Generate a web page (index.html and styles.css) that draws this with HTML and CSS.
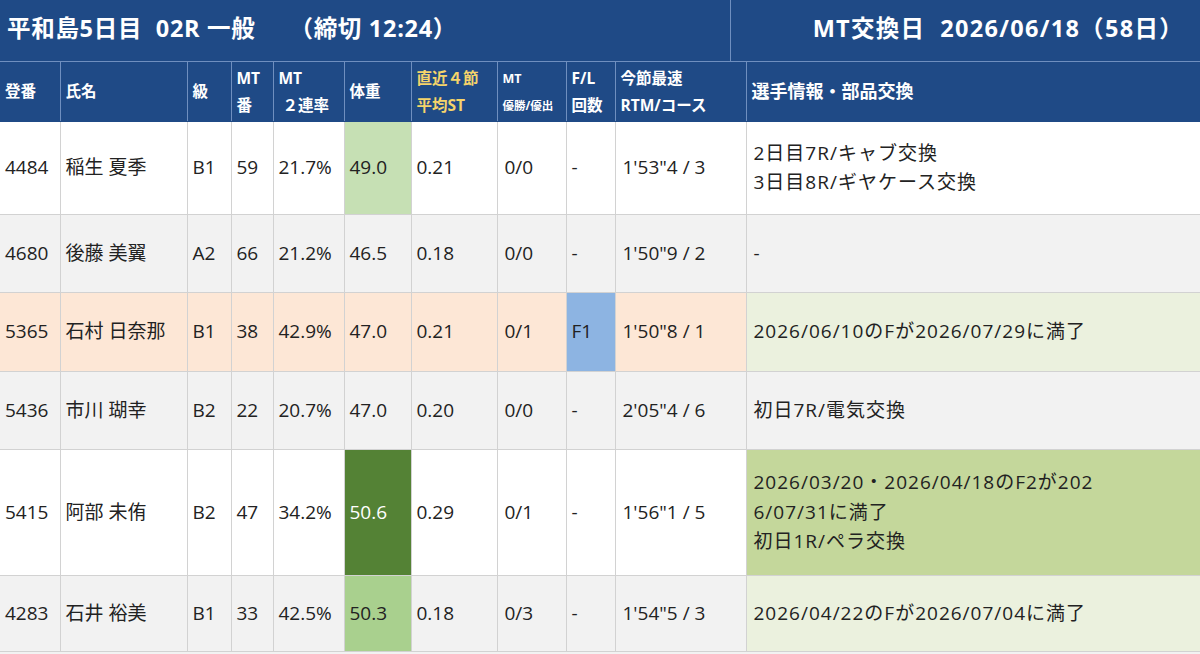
FILE: index.html
```html
<!DOCTYPE html>
<html lang="ja">
<head>
<meta charset="utf-8">
<link rel="stylesheet" href="styles.css">
</head>
<body>
<div class="titlebar">
  <div class="title-left">平和島5日目&nbsp; 02R 一般&nbsp;&nbsp;&nbsp;&nbsp;&nbsp;（締切 12:24）</div>
  <div class="title-right">MT交換日&nbsp; 2026/06/18（58日）</div>
</div>
<table class="grid">
  <colgroup>
    <col class="c1"><col class="c2"><col class="c3"><col class="c4"><col class="c5"><col class="c6"><col class="c7"><col class="c8"><col class="c9"><col class="c10"><col class="c11">
  </colgroup>
  <thead>
    <tr>
      <th>登番</th>
      <th>氏名</th>
      <th>級</th>
      <th>MT<br>番</th>
      <th>MT<br>&nbsp;２連率</th>
      <th>体重</th>
      <th class="yellow">直近４節<br>平均ST</th>
      <th class="small"><span class="mt">MT</span><br>優勝/優出</th>
      <th>F/L<br>回数</th>
      <th>今節最速<br>RTM/コース</th>
      <th class="big">選手情報・部品交換</th>
    </tr>
  </thead>
  <tbody>
    <tr class="r1 white">
      <td>4484</td><td>稲生 夏季</td><td>B1</td><td>59</td><td>21.7%</td><td class="w-light">49.0</td><td>0.21</td><td class="pl">0/0</td><td>-</td><td class="pl">1'53"4 / 3</td><td class="info">2日目7R/キャブ交換<br>3日目8R/ギヤケース交換</td>
    </tr>
    <tr class="r2 grey">
      <td>4680</td><td>後藤 美翼</td><td>A2</td><td>66</td><td>21.2%</td><td>46.5</td><td>0.18</td><td class="pl">0/0</td><td>-</td><td class="pl">1'50"9 / 2</td><td class="info">-</td>
    </tr>
    <tr class="r3 peach">
      <td>5365</td><td>石村 日奈那</td><td>B1</td><td>38</td><td>42.9%</td><td>47.0</td><td>0.21</td><td class="pl">0/1</td><td class="fl-blue">F1</td><td class="pl">1'50"8 / 1</td><td class="info i-light">2026/06/10のFが2026/07/29に満了</td>
    </tr>
    <tr class="r4 grey">
      <td>5436</td><td>市川 瑚幸</td><td>B2</td><td>22</td><td>20.7%</td><td>47.0</td><td>0.20</td><td class="pl">0/0</td><td>-</td><td class="pl">2'05"4 / 6</td><td class="info">初日7R/電気交換</td>
    </tr>
    <tr class="r5 white">
      <td>5415</td><td>阿部 未侑</td><td>B2</td><td>47</td><td>34.2%</td><td class="w-dark">50.6</td><td>0.29</td><td class="pl">0/1</td><td>-</td><td class="pl">1'56"1 / 5</td><td class="info i-mid">2026/03/20・2026/04/18のF2が202<br>6/07/31に満了<br>初日1R/ペラ交換</td>
    </tr>
    <tr class="r6 grey">
      <td>4283</td><td>石井 裕美</td><td>B1</td><td>33</td><td>42.5%</td><td class="w-mid">50.3</td><td>0.18</td><td class="pl">0/3</td><td>-</td><td class="pl">1'54"5 / 3</td><td class="info i-light">2026/04/22のFが2026/07/04に満了</td>
    </tr>
  </tbody>
</table>
</body>
</html>
```

FILE: styles.css
```css
html, body {
  margin: 0;
  padding: 0;
  background: #f2f2f2;
}
body {
  width: 1200px;
  height: 654px;
  overflow: hidden;
  font-family: "Open Sans", "Noto Sans CJK JP", sans-serif;
  color: #222;
}
.titlebar {
  display: flex;
  height: 62px;
  background: #1f4a86;
  color: #fff;
  font-weight: 700;
  font-size: 23.5px;
  box-sizing: border-box;
  border-bottom: 1px solid #6f8fbf;
}
.title-left {
  width: 731px;
  box-sizing: border-box;
  padding: 10px 0 0 7px;
  border-right: 1px solid #6f8fbf;
  white-space: nowrap;
  letter-spacing: 0.7px;
}
.title-right {
  flex: 1;
  text-align: right;
  padding: 10px 16px 0 0;
  white-space: nowrap;
  letter-spacing: 1.3px;
}
.grid {
  width: 1200px;
  border-collapse: collapse;
  table-layout: fixed;
}
.c1 { width: 60px; }
.c2 { width: 127px; }
.c3 { width: 44px; }
.c4 { width: 42px; }
.c5 { width: 71px; }
.c6 { width: 67px; }
.c7 { width: 86px; }
.c8 { width: 69px; }
.c9 { width: 49px; }
.c10 { width: 131px; }
.c11 { width: 454px; }
.grid th {
  background: #1f4a86;
  color: #fff;
  font-weight: 700;
  font-size: 15.5px;
  line-height: 27px;
  text-align: left;
  padding: 0 5px;
  height: 59px;
  border-left: 1px solid #6f8fbf;
  border-bottom: 1px solid #1f4a86;
  white-space: nowrap;
  vertical-align: middle;
}
.grid th:first-child { border-left: none; }
.grid th.yellow { color: #f5d46a; }
.grid th.small { font-size: 11.5px; }
.grid th.small .mt { font-size: 12.5px; }
.grid th.big { font-size: 18px; }
.grid td {
  font-size: 19px;
  padding: 0 5px;
  border-left: 1px solid #d2d2d2;
  border-bottom: 1px solid #d2d2d2;
  white-space: nowrap;
  vertical-align: middle;
  line-height: 29.5px;
}
.grid td:first-child { border-left: none; }
.grid td.pl { padding-left: 7px; }
.grid td.info { padding-left: 7px; letter-spacing: 1px; }
.r1 td { height: 92px; }
.r2 td { height: 77px; }
.r3 td { height: 78px; }
.r4 td { height: 77px; }
.r5 td { height: 125px; }
.r6 td { height: 75px; }
.white td { background: #ffffff; }
.grey td { background: #f2f2f2; }
.peach td { background: #fde7d6; }
.grid td.w-light { background: #c6e0b4; }
.grid td.w-dark { background: #548235; color: #fff; }
.grid td.w-mid { background: #a9d08e; }
.grid td.fl-blue { background: #8db4e2; }
.grid td.i-light { background: #ebf1de; }
.grid td.i-mid { background: #c4d79b; }
```
